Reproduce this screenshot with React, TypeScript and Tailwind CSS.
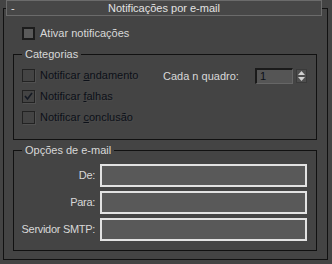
const font = { fontFamily: '"Liberation Sans", Arial, sans-serif' };

function Box({ checked, disabled }: { checked?: boolean; disabled?: boolean }) {
	return (
		<div
			className={
				disabled
					? "w-[13px] h-[13px] shrink-0 border border-[#222222] bg-[#444444] shadow-[1px_1px_0_#505050] flex items-center justify-center"
					: "w-[13px] h-[13px] shrink-0 border-2 border-[#1c1c1c] bg-[#5a5a5a] flex items-center justify-center"
			}
		>
			{checked && (
				<svg width="9" height="9" viewBox="0 0 9 9">
					<polyline
						points="1,4 3.5,7 8,1"
						fill="none"
						stroke="#151a24"
						strokeWidth="1.6"
					/>
				</svg>
			)}
		</div>
	);
}

function Disabled({ children }: { children: React.ReactNode }) {
	return (
		<span className="text-[#0c1018] [text-shadow:1px_1px_0_#4a4a4a]">
			{children}
		</span>
	);
}

function Field({ label }: { label: string }) {
	return (
		<div className="flex items-center">
			<div className="w-[82px] text-right pr-[1px] tracking-[-0.3px]">{label}</div>
			<div className="ml-[4px] w-[207px] h-[23px] border-2 border-[#e2e2e2] bg-[#595959]" />
		</div>
	);
}

export default function App() {
	return (
		<div
			className="w-[332px] h-[264px] bg-[#444444] pt-[8px] pl-[3px] text-[11px] leading-[13px] text-[#d8d8d8]"
			style={font}
		>
			<div className="w-[325px] h-[252px] border border-[#111111]">
				<div className="-mt-[9px] ml-[2px] w-[316px] h-[16px] border border-[#6b6b6b] bg-[#474747] relative flex items-center justify-center">
					<span className="absolute left-[4px] top-[1px] text-[#e0e0e0]">-</span>
					<span className="text-[#e2e2e2]">Notificações por e-mail</span>
				</div>

				<div className="mt-[11px] ml-[18px] flex items-center gap-[5px]">
					<Box />
					<span>Ativar notificações</span>
				</div>

				<fieldset className="mt-[7px] ml-[9px] w-[304px] h-[93px] border border-[#111111] min-w-0">
					<legend className="ml-[8px] px-[3px] leading-[14px]">Categorias</legend>
					<div className="flex pt-[8px] pl-[8px]">
						<div className="flex flex-col gap-[8px] w-[141px]">
							<div className="flex items-center gap-[5px] h-[13px]">
								<Box disabled />
								<Disabled>
									Notificar <span className="underline">a</span>ndamento
								</Disabled>
							</div>
							<div className="flex items-center gap-[5px] h-[13px]">
								<Box disabled checked />
								<Disabled>
									Notificar <span className="underline">f</span>alhas
								</Disabled>
							</div>
							<div className="flex items-center gap-[5px] h-[13px]">
								<Box disabled />
								<Disabled>
									Notificar <span className="underline">c</span>onclusão
								</Disabled>
							</div>
						</div>
						<div className="flex items-center h-[16px] -mt-[1px]">
							<span className="w-[92px]">Cada n quadro:</span>
							<div className="w-[38px] h-[16px] bg-[#555555] border-t-2 border-l-2 border-[#1a1a1a] border-r border-b border-r-[#666666] border-b-[#666666] pl-[3px] leading-[12px] text-[#0c1018]">
								1
							</div>
							<div className="ml-[3px] w-[11px] h-[14px] bg-[#4e4e4e] border border-[#3a3a3a] flex flex-col items-center justify-center gap-[2px]">
								<svg width="7" height="4" viewBox="0 0 7 4">
									<polygon points="3.5,0 7,4 0,4" fill="#d0d0d0" />
								</svg>
								<svg width="7" height="4" viewBox="0 0 7 4">
									<polygon points="0,0 7,0 3.5,4" fill="#d0d0d0" />
								</svg>
							</div>
						</div>
					</div>
				</fieldset>

				<fieldset className="mt-[3px] ml-[9px] w-[304px] h-[108px] border border-[#111111] min-w-0">
					<legend className="ml-[8px] px-[3px] leading-[14px]">Opções de e-mail</legend>
					<div className="flex flex-col gap-[4px] pt-[7px]">
						<Field label="De:" />
						<Field label="Para:" />
						<Field label="Servidor SMTP:" />
					</div>
				</fieldset>
			</div>
		</div>
	);
}
